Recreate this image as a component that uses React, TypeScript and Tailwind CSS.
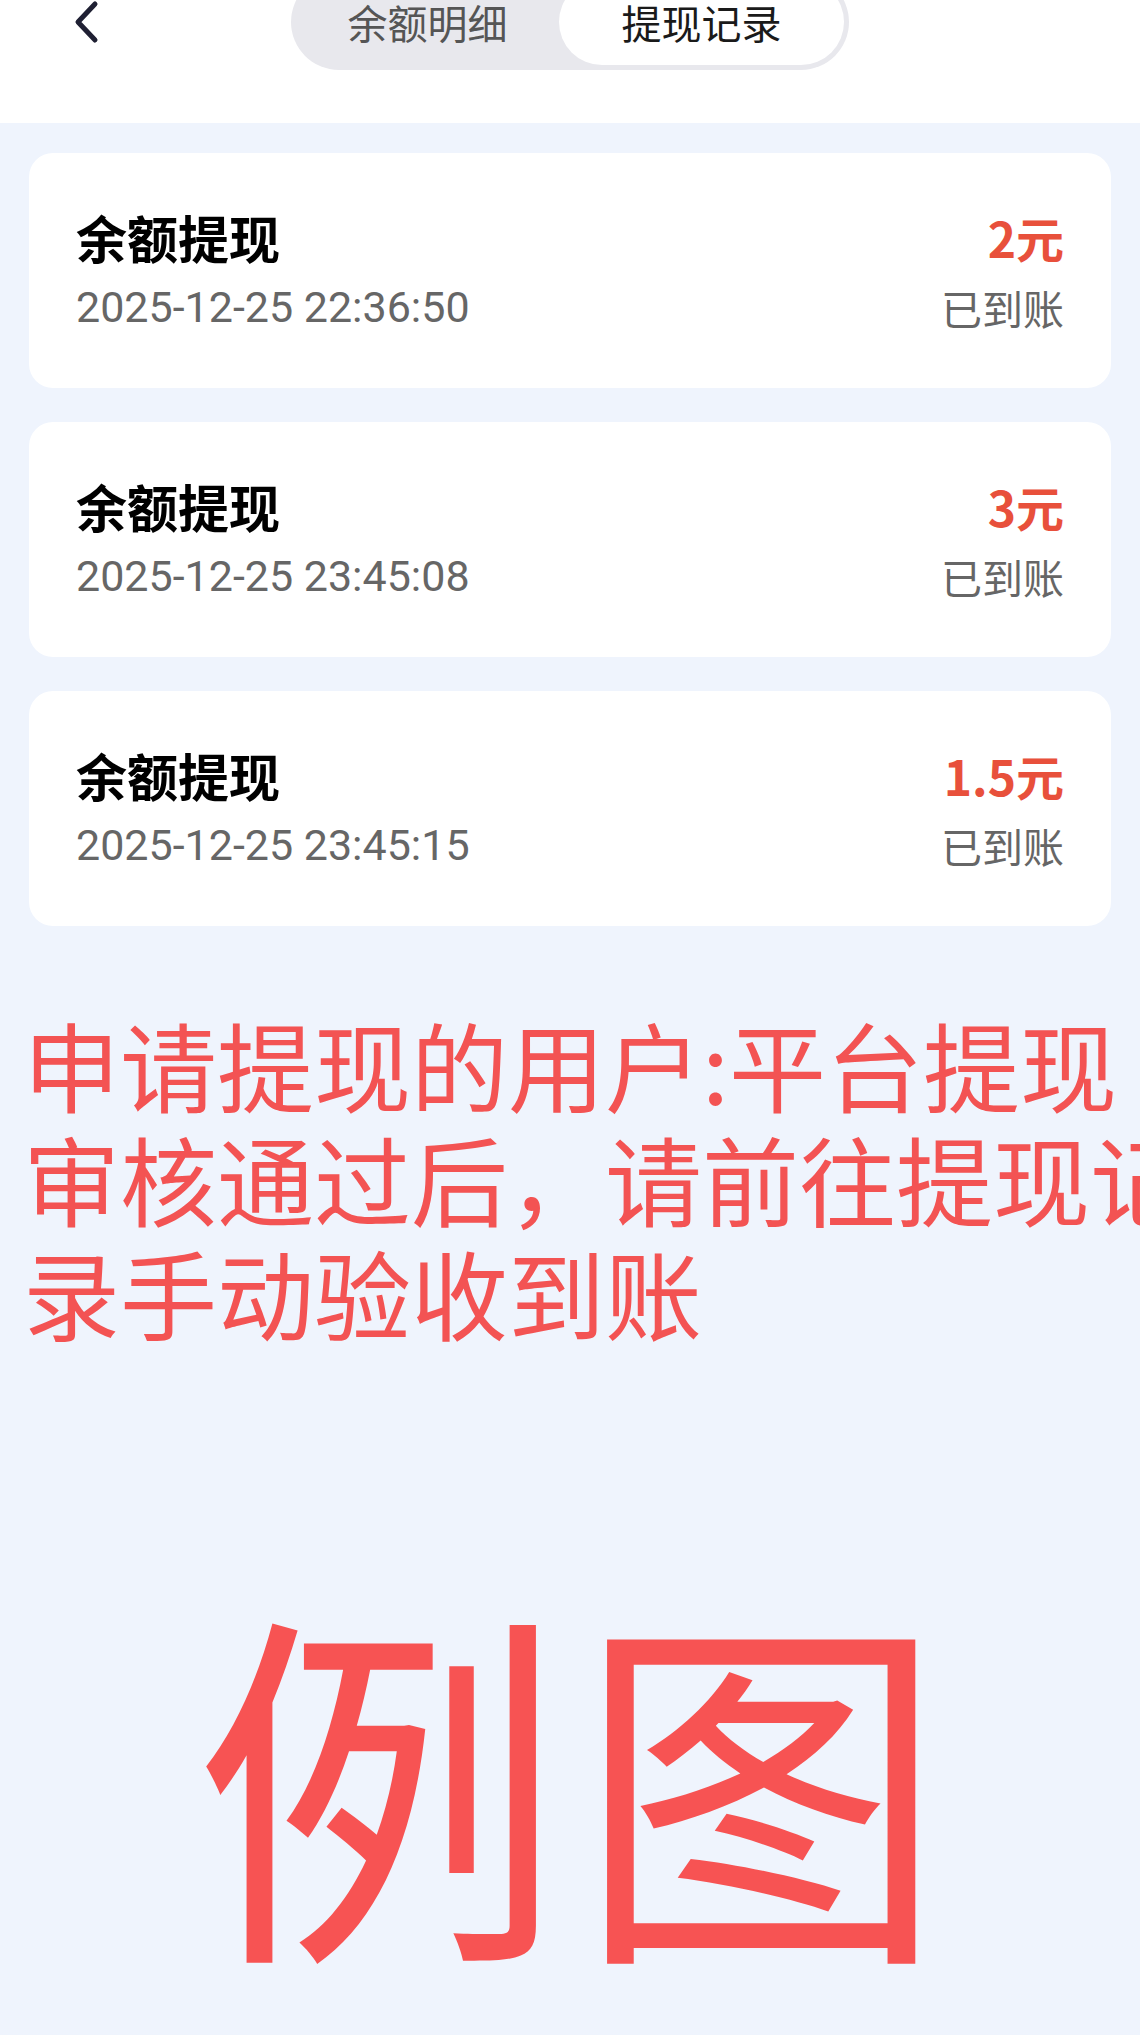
import React from 'react';

const CJK = { fontFamily: '"Noto Sans CJK SC", "Noto Sans", sans-serif' };

const records = [
  { title: '余额提现', time: '2025-12-25 22:36:50', amount: '2元', status: '已到账' },
  { title: '余额提现', time: '2025-12-25 23:45:08', amount: '3元', status: '已到账' },
  { title: '余额提现', time: '2025-12-25 23:45:15', amount: '1.5元', status: '已到账' },
];

function BackIcon() {
  return (
    <svg width="40" height="48" viewBox="0 0 40 48" fill="none">
      <polyline
        points="22,4 5,22 22,40"
        stroke="#1f2033"
        strokeWidth="5"
        strokeLinecap="round"
        strokeLinejoin="round"
      />
    </svg>
  );
}

function RecordCard({ title, time, amount, status }: (typeof records)[number]) {
  return (
    <div className="flex h-[235px] items-center justify-between rounded-[24px] bg-white px-[47px]">
      <div className="flex flex-col gap-[17px]">
        <div className="text-[51px] font-bold leading-[56px] text-black">{title}</div>
        <div
          className="text-[43px] leading-[50px] text-[#666666]"
          style={{ fontFamily: 'Roboto, "Noto Sans CJK SC", sans-serif' }}
        >
          {time}
        </div>
      </div>
      <div className="flex flex-col items-end gap-[17px]">
        <div className="text-[48px] font-bold leading-[56px] text-[#e8503b]">{amount}</div>
        <div className="text-[41px] leading-[50px] text-[#666666]">{status}</div>
      </div>
    </div>
  );
}

export default function App() {
  return (
    <div className="min-h-[2035px] w-[1140px] overflow-hidden bg-[#eff4fd]" style={CJK}>
      {/* Header */}
      <div className="grid h-[123px] grid-cols-[1fr_auto_1fr] items-start overflow-hidden bg-white">
        <div className="pl-[73px]">
          <BackIcon />
        </div>
        <div className="mt-[-26px] grid h-[96px] w-[558px] grid-cols-[263px_1fr] rounded-full bg-[#e8e8ed] p-[5px]">
          <div className="flex items-center justify-center text-[40px] text-[#555555]">余额明细</div>
          <div className="flex items-center justify-center rounded-full bg-white text-[40px] text-[#1a1a1a]">
            提现记录
          </div>
        </div>
        <div />
      </div>

      {/* Records */}
      <div className="flex flex-col gap-[34px] px-[29px] pt-[30px]">
        {records.map((r, i) => (
          <RecordCard key={i} {...r} />
        ))}
      </div>

      {/* Notice */}
      <div className="mt-[80px] whitespace-nowrap pl-[23px] text-[97px] font-[420] leading-[114px] text-[#f35353]">
        申请提现的用户:平台提现
        <br />
        审核通过后，请前往提现记
        <br />
        录手动验收到账
      </div>

      <div className="mt-[240px] pl-[12px] text-center text-[370px] font-[420] leading-none tracking-[12px] text-[#f75353]">
        例图
      </div>
    </div>
  );
}
